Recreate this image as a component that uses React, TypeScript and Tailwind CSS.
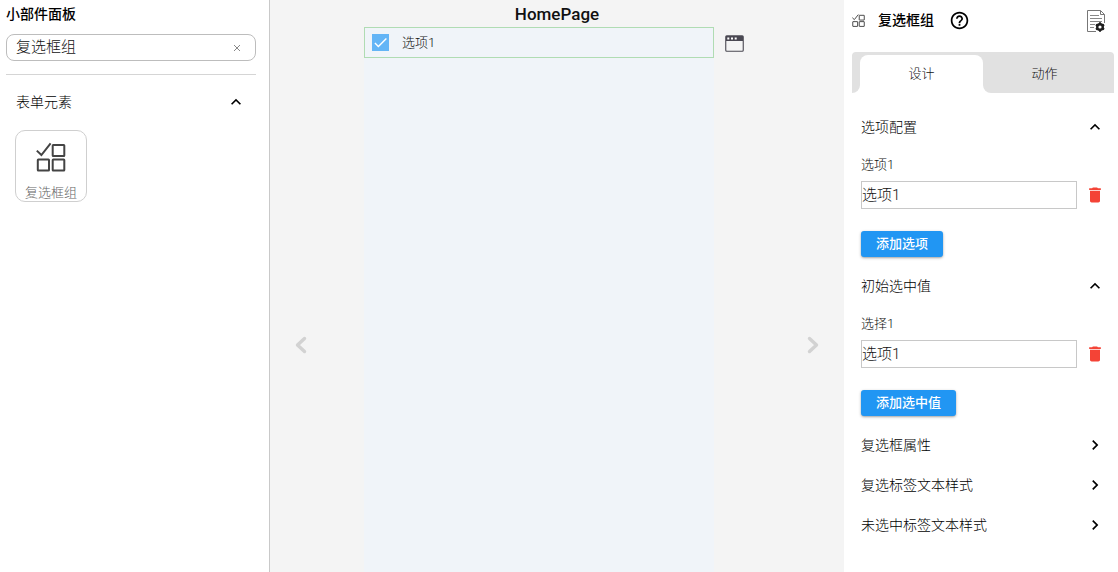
import React, { useState } from "react";
import {
  MdCheck,
  MdChevronRight,
  MdDelete,
  MdExpandLess,
  MdHelpOutline,
} from "react-icons/md";

function CheckboxGroupIcon({ className, strokeWidth = 2 }: { className?: string; strokeWidth?: number }) {
  return (
    <svg viewBox="0 0 30 30" fill="none" stroke="currentColor" strokeWidth={strokeWidth} className={className}>
      <path d="M0.8 8.6 5.4 13 14.6 1.4" />
      <rect x="16.7" y="3" width="11.6" height="11" rx="0.5" />
      <rect x="1.8" y="17.6" width="11.2" height="11" rx="0.5" />
      <rect x="16.7" y="17.6" width="11.6" height="11" rx="0.5" />
    </svg>
  );
}

function WindowIcon() {
  return (
    <svg viewBox="0 0 19 17" className="h-[17px] w-[19px] text-[#4a4852]">
      <rect x="0.75" y="0.75" width="17.5" height="15.5" rx="1" fill="none" stroke="currentColor" strokeWidth="1.1" />
      <path d="M1 1h17v5H1z" fill="currentColor" />
      <path d="M2.3 2.4h2v2h-2zM6 2.4h2v2H6zM9.7 2.4h2v2h-2z" fill="#fff" />
    </svg>
  );
}

function PageSettingsIcon() {
  return (
    <svg viewBox="0 0 18 23" fill="none" className="h-[23px] w-[18px]">
      <path d="M9 21.5H0.5V0.5H13.5L17.5 4.5V13" stroke="#777" />
      <path d="M13.5 0.5V4.5H17.5" stroke="#777" />
      <path d="M3 5.5H12M3 8.5H15M3 11.5H15M3 14.5H8M3 17.5H7" stroke="#888" />
      <circle cx="13" cy="17" r="2.8" stroke="#1f1f1f" strokeWidth="2.4" />
      <path
        d="M13 12.3v1.6M13 20.1v1.6M8.9 14.6l1.4.9M15.7 18.5l1.4.9M8.9 19.4l1.4-.9M15.7 15.5l1.4-.9"
        stroke="#1f1f1f"
        strokeWidth="2"
      />
    </svg>
  );
}

function PageArrow({ label, points }: { label: string; points: string }) {
  return (
    <button aria-label={label} className="shrink-0 text-[#d2d2d2]">
      <svg viewBox="0 0 12 18" fill="none" stroke="currentColor" strokeWidth="3.4" className="h-[18px] w-3">
        <polyline points={points} strokeLinecap="round" strokeLinejoin="round" />
      </svg>
    </button>
  );
}

interface OptionSectionProps {
  id: string;
  title: string;
  label: string;
  addText: string;
}

function OptionSection({ id, title, label, addText }: OptionSectionProps) {
  const [open, setOpen] = useState(true);
  const [value, setValue] = useState("选项1");

  return (
    <section>
      <button
        onClick={() => setOpen(!open)}
        aria-expanded={open}
        className="flex h-10 w-full items-center justify-between text-sm text-black"
      >
        {title}
        <MdExpandLess className={`size-5 ${open ? "" : "rotate-180"}`} />
      </button>
      {open && (
        <div className="pt-2 pb-[9px]">
          <label htmlFor={id} className="mb-[6px] block text-[13px] leading-5">
            {label}
          </label>
          <div className="flex items-center gap-2">
            <input
              id={id}
              value={value}
              onChange={(e) => setValue(e.target.value)}
              className="h-7 min-w-0 flex-1 border border-[#c8c8c8] pb-[3px] text-[15px] outline-none"
            />
            <button aria-label="删除" className="text-[#f44336]">
              <MdDelete className="size-5" />
            </button>
          </div>
          <button className="mt-[22px] block h-[26px] rounded-[3px] bg-[#2196f3] px-[15px] text-[13px] font-medium text-white shadow-sm shadow-black/30">
            {addText}
          </button>
        </div>
      )}
    </section>
  );
}

const collapsedSections = ["复选框属性", "复选标签文本样式", "未选中标签文本样式"];

export default function App() {
  const [query, setQuery] = useState("复选框组");
  const [checked, setChecked] = useState(true);

  return (
    <div className="flex min-h-screen bg-[#f4f4f4] font-['Roboto','Noto_Sans_CJK_SC',sans-serif] font-light text-[#111]">
      {/* Widget palette */}
      <aside className="w-[270px] shrink-0 border-r border-[#c9c9c9] bg-white pt-1 pr-[13px] pl-[6px]">
        <h1 className="text-sm leading-5 font-medium text-black">小部件面板</h1>
        <div className="mt-[10px] flex h-[27px] items-center rounded-lg border border-[#bdbdbd] pr-[13px] pl-[9px]">
          <input
            aria-label="搜索小部件"
            value={query}
            onChange={(e) => setQuery(e.target.value)}
            className="min-w-0 flex-1 pb-[2px] text-[15px] leading-5 outline-none"
          />
          <button aria-label="清除" onClick={() => setQuery("")} className="text-[#888]">
            <svg viewBox="0 0 10 10" stroke="currentColor" className="size-[10px]">
              <path d="M2 2 8 8M8 2 2 8" />
            </svg>
          </button>
        </div>
        <hr className="mt-[13px] border-[#d5d5d5]" />
        <button className="mt-[7px] flex h-10 w-full items-center justify-between pr-[10px] pl-[10px] text-sm text-black">
          表单元素
          <MdExpandLess className="size-5" />
        </button>
        <button className="mt-2 ml-[9px] flex size-[72px] flex-col items-center justify-between rounded-[10px] border border-[#cfcfcf] pt-[11px] text-[#444]">
          <CheckboxGroupIcon className="size-[30px]" />
          <span className="text-[13px] leading-4 text-[#666]">复选框组</span>
        </button>
      </aside>

      {/* Canvas */}
      <main className="flex min-w-0 flex-1 items-stretch justify-between px-[25px]">
        <div className="flex items-center pt-[118px]">
          <PageArrow label="上一页" points="9.5,2.5 2.5,9 9.5,15.5" />
        </div>
        <div className="flex w-[386px] flex-col">
          <h2 className="pt-[2px] pb-px text-center text-[17px] leading-6 font-medium">HomePage</h2>
          <div className="flex flex-1">
            <div className="w-[350px] bg-[#f0f4f9]">
              <label className="flex h-[31px] items-center gap-[13px] border border-[#b0dcb3] pl-[7px] text-[13px]">
                <span className="relative flex size-[17px]">
                  <input
                    type="checkbox"
                    checked={checked}
                    onChange={(e) => setChecked(e.target.checked)}
                    className="size-full appearance-none border border-[#64b5f6] checked:bg-[#64b5f6]"
                  />
                  {checked && <MdCheck className="pointer-events-none absolute inset-0 size-full text-white" />}
                </span>
                选项1
              </label>
            </div>
            <button aria-label="页面" className="ml-[11px] self-start pt-2">
              <WindowIcon />
            </button>
          </div>
        </div>
        <div className="flex items-center pt-[118px]">
          <PageArrow label="下一页" points="2.5,2.5 9.5,9 2.5,15.5" />
        </div>
      </main>

      {/* Property panel */}
      <aside className="w-[274px] shrink-0 bg-white">
        <header className="flex h-[52px] items-start justify-between pt-[10px] pr-[13px] pl-2">
          <div className="flex h-5 items-center">
            <CheckboxGroupIcon className="size-[13px] text-[#444]" strokeWidth={2.2} />
            <h2 className="ml-[13px] text-sm leading-5 font-medium text-black">复选框组</h2>
            <button aria-label="帮助" className="ml-[15px] text-black">
              <MdHelpOutline className="size-[21px]" />
            </button>
          </div>
          <button aria-label="页面设置">
            <PageSettingsIcon />
          </button>
        </header>

        <div role="tablist" className="mr-1 ml-2 flex h-[41px] rounded-t bg-[#e1e1e1] pt-[3px] text-[13px]">
          <div className="w-2 bg-white">
            <div className="h-full rounded-br-lg bg-[#e1e1e1]" />
          </div>
          <button role="tab" aria-selected="true" className="flex-1 rounded-t-lg bg-white">
            设计
          </button>
          <div className="flex flex-1 bg-white">
            <button role="tab" aria-selected="false" className="flex-1 rounded-bl-lg bg-[#e1e1e1]">
              动作
            </button>
          </div>
          <div className="w-2" />
        </div>

        <div className="pt-[14px] pr-[13px] pl-[17px]">
          <OptionSection id="option-1" title="选项配置" label="选项1" addText="添加选项" />
          <OptionSection id="initial-1" title="初始选中值" label="选择1" addText="添加选中值" />
          {collapsedSections.map((title) => (
            <button key={title} className="flex h-10 w-full items-center justify-between text-sm text-black">
              {title}
              <MdChevronRight className="size-5" />
            </button>
          ))}
        </div>
      </aside>
    </div>
  );
}
